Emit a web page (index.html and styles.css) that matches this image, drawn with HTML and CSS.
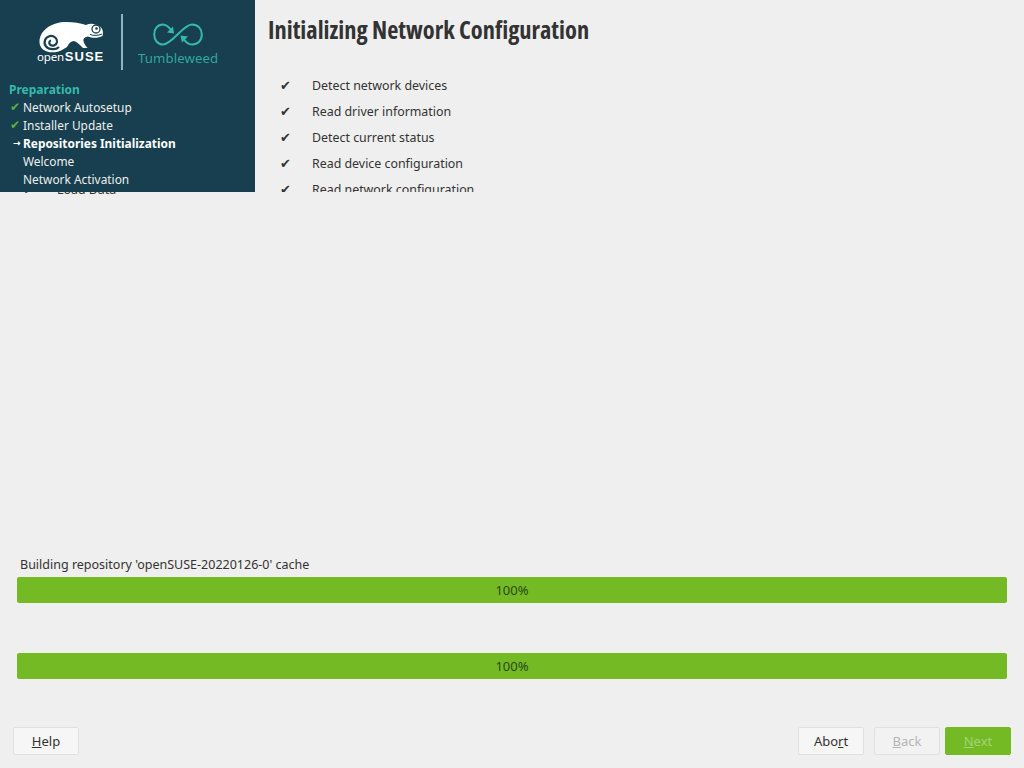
FILE: index.html
```html
<!DOCTYPE html>
<html lang="en">
<head>
<meta charset="utf-8">
<title>Initializing Network Configuration</title>
<link rel="stylesheet" href="styles.css">
</head>
<body>
<div class="app">
  <div class="top">
    <aside class="sidebar">
      <div class="brand">
        <div class="suse">
          <svg class="chameleon" viewBox="37 20 68 33" width="68" height="33" aria-hidden="true">
            <path fill="#fff" d="M39.5 42C39.5 30 52 22 66 22C74 22 80 23 86 25C90 23 96 23.500 100 26.500C103 29 103.500 33 102.500 36C98 38.500 92 38 88 36.500C85 37 83 38.500 83.500 41C84 44 86 46 87.500 48L83 48C80 45 77 42 74 41C71 41 69 43 67 47L62 50C58 52.500 52 53 47 51.500C42 50 39.500 46 39.500 42Z"/>
            <path fill="none" stroke="#173f4f" stroke-width="2.200" d="M59 47C56 50 49 50 46 46.500C43 42.500 45 37 50 36C54 35.500 57.500 38.500 57 42C56.500 45 53 46.500 50.500 45C48.500 43.500 49 41 51 40.500"/>
            <circle cx="96" cy="29" r="4" fill="#fff" stroke="#173f4f" stroke-width="1.300"/>
            <circle cx="96.500" cy="28.500" r="1.300" fill="#173f4f"/>
            <path fill="none" stroke="#173f4f" stroke-width="1" d="M90 34.500C94 36 98 35.500 102 34"/>
          </svg>
          <div class="suse-name"><span class="open">open</span><span class="suse-bold">SUSE</span></div>
        </div>
        <div class="divider"></div>
        <div class="tw">
          <svg class="loop" viewBox="0 0 50 24" width="50" height="24" aria-hidden="true">
            <path fill="none" stroke="#35b9ab" stroke-width="2" d="M19 8C16 4 13 1.500 10 1.500C4.500 1.500 1.200 6 1.200 11.500C1.200 17.500 5 21.500 10 21.500C19 21.500 30 1.500 39 1.500C45 1.500 48.800 6 48.800 11.500C48.800 17.500 45 21.500 39 21.500C35.500 21.500 32.500 19 30 15"/>
            <path fill="#35b9ab" d="M21 10.500L14 9.500L20 3.500Z"/>
            <path fill="#35b9ab" d="M27.500 12.500L35 13.500L29 19.500Z"/>
          </svg>
          <div class="tw-name">Tumbleweed</div>
        </div>
      </div>
      <h2 class="stage">Preparation</h2>
      <ul class="steps">
        <li class="step"><span class="mark done">✔</span>Network Autosetup</li>
        <li class="step"><span class="mark done">✔</span>Installer Update</li>
        <li class="step current"><span class="mark arrow">→</span>Repositories Initialization</li>
        <li class="step"><span class="mark"></span>Welcome</li>
        <li class="step"><span class="mark"></span>Network Activation</li>
      </ul>
    </aside>
    <main class="content">
      <h1 class="title">Initializing Network Configuration</h1>
      <ul class="tasks">
        <li class="task"><span class="tick">✔</span>Detect network devices</li>
        <li class="task"><span class="tick">✔</span>Read driver information</li>
        <li class="task"><span class="tick">✔</span>Detect current status</li>
        <li class="task"><span class="tick">✔</span>Read device configuration</li>
        <li class="task"><span class="tick">✔</span>Read network configuration</li>
      </ul>
    </main>
  </div>
  <div class="ghost"><div class="ghost-row"><span class="ghost-tick">✔</span>Load Data</div></div>
  <section class="progress">
    <div class="progress-label">Building repository 'openSUSE-20220126-0' cache</div>
    <div class="bar">100%</div>
    <div class="bar bar-second">100%</div>
  </section>
  <footer class="buttons">
    <button class="btn"><u>H</u>elp</button>
    <span class="grow"></span>
    <button class="btn">Abo<u>r</u>t</button>
    <button class="btn disabled"><u>B</u>ack</button>
    <button class="btn primary"><u>N</u>ext</button>
  </footer>
</div>
</body>
</html>
```
FILE: styles.css
```css
* { box-sizing: border-box; }
html, body { margin: 0; height: 100%; }
body {
  background: #efefef;
  color: #333;
  font-family: "Noto Sans", "Open Sans", "Liberation Sans", sans-serif;
  font-size: 13px;
  overflow: hidden;
}
ul { list-style: none; margin: 0; padding: 0; }
.app { position: relative; display: flex; flex-direction: column; height: 768px; }
.top { display: flex; height: 192px; overflow: hidden; flex: none; }
.sidebar { width: 255px; flex: none; background: #173f4f; color: #eee; font-size: 11.9px; }
.brand { display: flex; height: 80px; padding-top: 14px; }
.suse { position: relative; width: 121px; padding: 6px 0 0 37px; flex: none; }
.chameleon { display: block; }
.suse-name { margin-top: -3px; color: #fff; line-height: 13px; white-space: nowrap; }
.open { font-size: 11.5px; letter-spacing: -0.2px; }
.suse-bold { margin-left: 1px; font-family: "Liberation Sans", sans-serif; font-weight: 700; font-size: 13px; letter-spacing: 1px; }
.divider { width: 2px; height: 56px; background: #8fb3c2; flex: none; }
.tw { padding: 9px 0 0 15px; color: #35b9ab; }
.loop { display: block; margin-left: 15px; }
.tw-name { font-size: 13.2px; line-height: 19px; margin-top: 2px; letter-spacing: 0.1px; opacity: .85; }
.stage { margin: 0 0 0 9px; padding: 0; height: 18px; line-height: 20px; font-size: 12px; font-weight: 700; color: #35b9ab; }
.step { display: flex; height: 18px; line-height: 18px; white-space: nowrap; }
.mark { width: 23px; padding-left: 10px; font-family: "DejaVu Sans", sans-serif; font-size: 12px; flex: none; }
.done { color: #5fae3a; }
.arrow { padding-left: 13px; font-size: 9px; font-weight: 700; }
.current { font-weight: 700; color: #fff; }
.content { flex: 1; padding-left: 13px; min-width: 0; }
.title {
  margin: 12px 0 0;
  font-family: "Open Sans", "Noto Sans", sans-serif;
  font-stretch: condensed;
  font-size: 24.4px;
  line-height: 36px;
  font-weight: 700;
  color: #333;
  white-space: nowrap;
}
.tasks { margin-top: 25px; font-size: 12.4px; }
.task { display: flex; height: 26px; line-height: 26px; }
.tick { width: 44px; padding-left: 12px; flex: none; font-family: "DejaVu Sans", sans-serif; font-size: 13px; }
.ghost { position: absolute; top: 192px; left: 0; width: 255px; height: 4px; overflow: hidden; font-size: 12.4px; }
.ghost-row { display: flex; margin-top: -16px; padding-left: 23px; height: 26px; line-height: 28px; }
.ghost-tick { width: 34px; flex: none; font-family: "DejaVu Sans", sans-serif; }
.progress { margin-top: auto; padding: 0 17px; }
.progress-label { padding-left: 3px; height: 18px; line-height: 20px; margin-bottom: 4px; font-size: 12.5px; }
.bar { height: 26px; line-height: 26px; border-radius: 2px; background: #73ba25; text-align: center; color: #2b4a12; }
.bar-second { margin-top: 50px; }
.buttons { display: flex; padding: 48px 13px 13px; gap: 10px; }
.grow { flex: 1; }
.btn {
  width: 66px;
  height: 28px;
  padding: 0;
  border: 1px solid #e0e0e0;
  border-radius: 2px;
  background: #f6f6f6;
  color: #333;
  font: inherit;
}
.disabled { color: #b5b5b5; background: #f2f2f2; }
.primary { margin-left: -5px; background: #73ba25; border-color: #73ba25; color: #a4d27a; }
```
